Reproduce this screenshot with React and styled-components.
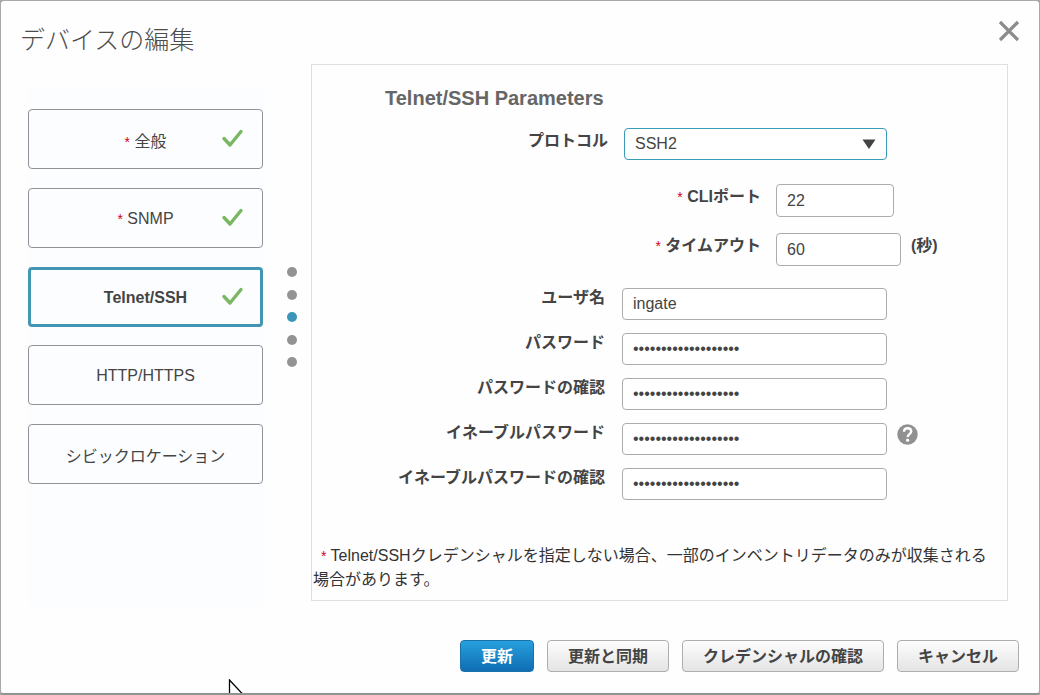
import React, { useState } from "react";
import styled, { createGlobalStyle, css } from "styled-components";

const GlobalStyle = createGlobalStyle`
  *, *::before, *::after { box-sizing: border-box; }
  body {
    margin: 0;
    background: #a8a8a8;
    color: #444;
    font: 16px/24px "Liberation Sans", "Noto Sans CJK JP", sans-serif;
  }
  button, input, select { font: inherit; color: inherit; }
`;

const Dialog = styled.main`
  position: relative;
  display: flex;
  flex-direction: column;
  min-height: 100vh;
  background: #fefefe;
  border: 1px solid #a8a8a8;
  border-bottom: 2px solid #929292;
  border-radius: 4px;
  overflow: hidden;
`;

const Header = styled.header`
  display: flex;
  justify-content: space-between;
  align-items: flex-start;
  padding: 19px 19px 0;
  height: 63px;
`;

const Title = styled.h1`
  margin: 0;
  color: #4c4c4c;
  font-size: 25px;
  font-weight: 300;
  line-height: 40px;
`;

const CloseButton = styled.button`
  display: flex;
  padding: 0;
  border: 0;
  background: none;
  cursor: pointer;
`;

const Body = styled.div`
  display: flex;
  flex: 1;
  padding: 0 31px 0 26px;
`;

const Steps = styled.nav`
  width: 237px;
  margin: 24px 0 -5px;
  padding: 21px 1px 0;
  background: #fcfdff;
`;

const StepList = styled.div`
  display: flex;
  flex-direction: column;
  justify-content: space-between;
  height: 375px;
`;

const StepButton = styled.button`
  display: grid;
  grid-template-columns: 1fr auto 1fr;
  align-items: center;
  height: 60px;
  padding: 0 18px;
  background: transparent;
  border: 1px solid #8f9297;
  border-radius: 4px;
  line-height: normal;
  cursor: pointer;
  ${(p) =>
    p.$active &&
    css`
      padding: 0 16px;
      border: 3px solid #4396b3;
      font-weight: bold;
    `}
`;

const StepLabel = styled.span`
  grid-column: 2;
  padding-top: 2px;
`;

const Star = styled.span`
  color: #d0021b;
  font-size: 14px;
  font-weight: normal;
`;

const CheckIcon = styled.svg`
  justify-self: end;
`;

const Dots = styled.div`
  display: flex;
  flex-direction: column;
  justify-content: space-between;
  height: 100px;
  margin: 203px 14px 0 23px;
`;

const Dot = styled.span`
  width: 10px;
  height: 10px;
  border-radius: 50%;
  background: ${(p) => (p.$active ? "#3a95b8" : "#939393")};
`;

const Panel = styled.section`
  display: flex;
  flex-direction: column;
  flex: 1;
  border: 1px solid #dfdfdf;
`;

const PanelTitle = styled.h2`
  margin: 21px 0 18px 73px;
  color: #666;
  font-size: 20px;
  line-height: 24px;
`;

const FieldGroup = styled.div`
  display: flex;
  flex-direction: column;
  gap: ${(p) => p.$gap || 0}px;
  margin-bottom: ${(p) => p.$after || 0}px;
`;

const FieldRow = styled.div`
  display: flex;
  align-items: flex-start;
`;

const FieldLabel = styled.label`
  width: ${(p) => p.$width}px;
  margin-right: ${(p) => p.$space || 15}px;
  padding-top: 1px;
  text-align: right;
  font-weight: bold;
`;

const boxStyle = css`
  width: ${(p) => p.$width}px;
  background: #fff;
  border: 1px solid #aaacb0;
  border-radius: 4px;
  padding: 0 10px;
  outline: none;
`;

const TextBox = styled.input`
  ${boxStyle}
  height: ${(p) => p.$height || 32}px;
  margin-top: ${(p) => p.$top || 0}px;
`;

const SelectWrap = styled.div`
  display: grid;
  align-items: center;
  > * { grid-area: 1 / 1; }
`;

const Select = styled.select`
  ${boxStyle}
  height: 32px;
  border-color: #3a9bb8;
  appearance: none;
`;

const SelectArrow = styled.svg`
  justify-self: end;
  margin-right: 11px;
  pointer-events: none;
`;

const Unit = styled.span`
  margin-left: 10px;
  padding-top: 1px;
  font-weight: bold;
`;

const HelpButton = styled.button`
  display: flex;
  margin: 4px 0 0 10px;
  padding: 0;
  border: 0;
  background: none;
`;

const Note = styled.p`
  margin: 44px 8px 8px 0;
  padding-left: 1px;
  color: #333;
  text-indent: 8px;
`;

const Footer = styled.footer`
  display: flex;
  justify-content: flex-end;
  gap: 13px;
  padding: 39px 20px 21px;
`;

const ActionButton = styled.button`
  height: 32px;
  padding: 1px 20px 0;
  border: 1px solid ${(p) => (p.$primary ? "#1a70a8" : "#adadad")};
  border-radius: 4px;
  background: ${(p) =>
    p.$primary
      ? "linear-gradient(#27a0dc, #0f6db4)"
      : "linear-gradient(#fdfdfd, #e4e4e4)"};
  color: ${(p) => (p.$primary ? "#fff" : "#444")};
  font-weight: bold;
  line-height: 24px;
  white-space: nowrap;
  cursor: pointer;
`;

const Pointer = styled.svg`
  position: absolute;
  left: 227px;
  bottom: -8px;
`;

const steps = [
  { name: "全般", required: true, done: true },
  { name: "SNMP", required: true, done: true },
  { name: "Telnet/SSH", done: true },
  { name: "HTTP/HTTPS" },
  { name: "シビックロケーション" },
];

const credentials = [
  { id: "user", label: "ユーザ名", type: "text", value: "ingate" },
  { id: "password", label: "パスワード", type: "password", value: "passwordpassword123" },
  { id: "password2", label: "パスワードの確認", type: "password", value: "passwordpassword123" },
  { id: "enable", label: "イネーブルパスワード", type: "password", value: "passwordpassword123", help: true },
  { id: "enable2", label: "イネーブルパスワードの確認", type: "password", value: "passwordpassword123" },
];

export default function App() {
  const [active, setActive] = useState(2);

  return (
    <>
      <GlobalStyle />
      <Dialog>
        <Header>
          <Title>デバイスの編集</Title>
          <CloseButton type="button" aria-label="閉じる">
            <svg width="22" height="22" viewBox="0 0 22 22">
              <path d="M2 2 20 20M20 2 2 20" stroke="#8c8c8c" strokeWidth="3.2" fill="none" />
            </svg>
          </CloseButton>
        </Header>
        <Body>
          <Steps>
            <StepList>
              {steps.map((step, i) => (
                <StepButton key={step.name} type="button" $active={i === active} onClick={() => setActive(i)}>
                  <StepLabel>
                    {step.required && <><Star>*</Star>{" "}</>}
                    {step.name}
                  </StepLabel>
                  {step.done && (
                    <CheckIcon width="24" height="20" viewBox="0 0 24 20">
                      <path d="M4 9.5 10 16 21 2.5" fill="none" stroke="#7ab763" strokeWidth="3.4" strokeLinecap="round" strokeLinejoin="round" />
                    </CheckIcon>
                  )}
                </StepButton>
              ))}
            </StepList>
          </Steps>
          <Dots>
            {steps.map((step, i) => (
              <Dot key={step.name} $active={i === active} />
            ))}
          </Dots>
          <Panel>
            <PanelTitle>Telnet/SSH Parameters</PanelTitle>
            <FieldGroup $after={24}>
              <FieldRow>
                <FieldLabel htmlFor="protocol" $width={296} $space={16}>プロトコル</FieldLabel>
                <SelectWrap>
                  <Select id="protocol" defaultValue="SSH2" $width={263}>
                    <option>SSH2</option>
                    <option>Telnet</option>
                  </Select>
                  <SelectArrow width="14" height="10" viewBox="0 0 14 10">
                    <path d="M0.5 0.5h13L7 10z" fill="#444" />
                  </SelectArrow>
                </SelectWrap>
              </FieldRow>
            </FieldGroup>
            <FieldGroup $gap={16} $after={19}>
              <FieldRow>
                <FieldLabel htmlFor="port" $width={449}><Star>*</Star> CLIポート</FieldLabel>
                <TextBox id="port" defaultValue="22" $width={118} $height={33} />
              </FieldRow>
              <FieldRow>
                <FieldLabel htmlFor="timeout" $width={449}><Star>*</Star> タイムアウト</FieldLabel>
                <TextBox id="timeout" defaultValue="60" $width={125} $height={33} />
                <Unit>(秒)</Unit>
              </FieldRow>
            </FieldGroup>
            <FieldGroup $gap={10}>
              {credentials.map((field) => (
                <FieldRow key={field.id}>
                  <FieldLabel htmlFor={field.id} $width={293} $space={17}>{field.label}</FieldLabel>
                  <TextBox id={field.id} type={field.type} defaultValue={field.value} $width={265} $top={3} />
                  {field.help && (
                    <HelpButton type="button" aria-label="ヘルプ">
                      <svg width="21" height="21" viewBox="0 0 21 21">
                        <circle cx="10.5" cy="10.5" r="10.2" fill="#919191" />
                        <path d="M7 7.8C7 5.6 8.5 4.2 10.6 4.2s3.6 1.3 3.6 3.2c0 2.6-3.5 2.9-3.5 5.6" fill="none" stroke="#fff" strokeWidth="2.4" />
                        <circle cx="10.6" cy="16.2" r="1.6" fill="#fff" />
                      </svg>
                    </HelpButton>
                  )}
                </FieldRow>
              ))}
            </FieldGroup>
            <Note>
              <Star>*</Star>{" "}
              Telnet/SSHクレデンシャルを指定しない場合、一部のインベントリデータのみが収集される場合があります。
            </Note>
          </Panel>
        </Body>
        <Footer>
          <ActionButton type="button" $primary>更新</ActionButton>
          <ActionButton type="button">更新と同期</ActionButton>
          <ActionButton type="button">クレデンシャルの確認</ActionButton>
          <ActionButton type="button">キャンセル</ActionButton>
        </Footer>
        <Pointer width="16" height="22" viewBox="0 0 16 22" aria-hidden="true">
          <path d="M1.5 1v20l5-5h9z" fill="#fff" stroke="#000" strokeWidth="1.3" />
        </Pointer>
      </Dialog>
    </>
  );
}
